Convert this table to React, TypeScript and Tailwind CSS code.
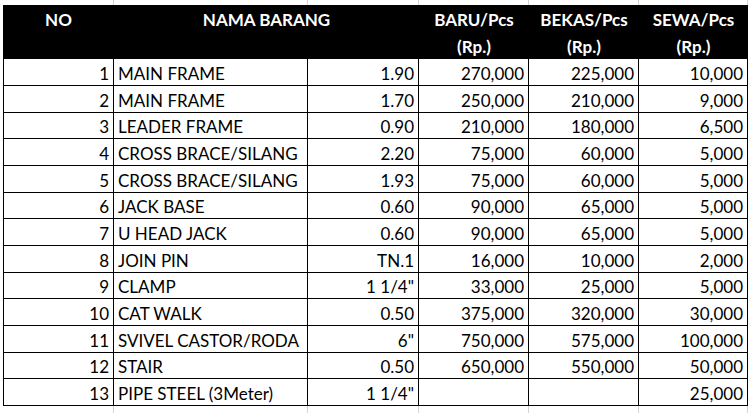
import React from "react";

const rows: [string, string, string, string, string, string][] = [
  ["1", "MAIN FRAME", "1.90", "270,000", "225,000", "10,000"],
  ["2", "MAIN FRAME", "1.70", "250,000", "210,000", "9,000"],
  ["3", "LEADER FRAME", "0.90", "210,000", "180,000", "6,500"],
  ["4", "CROSS BRACE/SILANG", "2.20", "75,000", "60,000", "5,000"],
  ["5", "CROSS BRACE/SILANG", "1.93", "75,000", "60,000", "5,000"],
  ["6", "JACK BASE", "0.60", "90,000", "65,000", "5,000"],
  ["7", "U HEAD JACK", "0.60", "90,000", "65,000", "5,000"],
  ["8", "JOIN PIN", "TN.1", "16,000", "10,000", "2,000"],
  ["9", "CLAMP", "1 1/4\"", "33,000", "25,000", "5,000"],
  ["10", "CAT WALK", "0.50", "375,000", "320,000", "30,000"],
  ["11", "SVIVEL CASTOR/RODA", "6\"", "750,000", "575,000", "100,000"],
  ["12", "STAIR", "0.50", "650,000", "550,000", "50,000"],
  ["13", "PIPE STEEL (3Meter)", "1 1/4\"", "", "", "25,000"],
];

const rowHeights = [
  "h-[27px]", "h-[27px]", "h-[26px]", "h-[27px]", "h-[27px]", "h-[26px]",
  "h-[27px]", "h-[27px]", "h-[26px]", "h-[27px]", "h-[27px]", "h-[26px]", "h-[27px]",
];

function GridStrip({ h }: { h: string }) {
  return (
    <div className={`flex ${h} pl-[4px]`}>
      <div className="w-[110px] border-r border-[#d4d4d4]" />
      <div className="w-[194px] border-r border-[#d4d4d4]" />
      <div className="w-[111px] border-r border-[#d4d4d4]" />
      <div className="w-[110px] border-r border-[#d4d4d4]" />
      <div className="w-[110px] border-r border-[#d4d4d4]" />
      <div className="w-[109px] border-r border-[#d4d4d4]" />
    </div>
  );
}

function HeadCell({ w, l1, l2 }: { w: string; l1: string; l2?: string }) {
  return (
    <div className={`${w} flex flex-col`}>
      <div className="h-[27px] flex items-end justify-center pb-[2px] leading-[20px]">{l1}</div>
      <div className="h-[27px] flex items-end justify-center pb-[2px] leading-[20px]">{l2 ?? ""}</div>
    </div>
  );
}

export default function App() {
  return (
    <div
      className="w-[749px] h-[413px] bg-white overflow-hidden text-black text-[17px]"
      style={{ fontFamily: "Lato, 'Liberation Sans', sans-serif" }}
    >
      <GridStrip h="h-[5px]" />
      <div className="pl-[3px]">
        <div className="flex h-[54px] w-[745px] bg-black text-white font-bold">
          <HeadCell w="w-[111px]" l1="NO" />
          <HeadCell w="w-[305px]" l1="NAMA BARANG" />
          <HeadCell w="w-[110px]" l1="BARU/Pcs" l2="(Rp.)" />
          <HeadCell w="w-[110px]" l1="BEKAS/Pcs" l2="(Rp.)" />
          <HeadCell w="w-[109px]" l1="SEWA/Pcs" l2="(Rp.)" />
        </div>
        {rows.map((r, i) => (
          <div key={i} className={`flex ${rowHeights[i]} border-l border-black leading-[20px]`}>
            <div className="w-[110px] border-r border-b border-black flex items-end justify-end pr-[4px] pb-[1px]">{r[0]}</div>
            <div className="w-[194px] border-r border-b border-black flex items-end justify-start pl-[4px] pb-[1px] whitespace-nowrap">{r[1]}</div>
            <div className="w-[111px] border-r border-b border-black flex items-end justify-end pr-[4px] pb-[1px]">{r[2]}</div>
            <div className="w-[110px] border-r border-b border-black flex items-end justify-end pr-[4px] pb-[1px]">{r[3]}</div>
            <div className="w-[110px] border-r border-b border-black flex items-end justify-end pr-[4px] pb-[1px]">{r[4]}</div>
            <div className="w-[109px] border-r border-b border-black flex items-end justify-end pr-[4px] pb-[1px]">{r[5]}</div>
          </div>
        ))}
      </div>
      <GridStrip h="h-[7px]" />
    </div>
  );
}
